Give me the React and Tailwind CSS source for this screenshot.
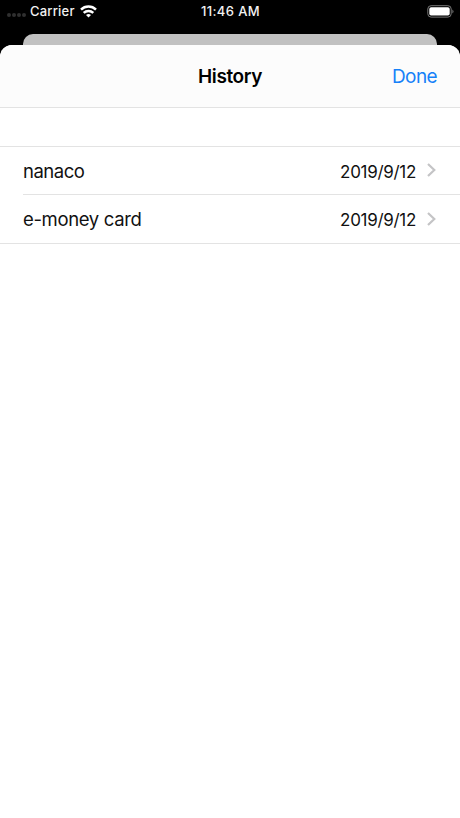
const entries = [
  { name: "nanaco", date: "2019/9/12", tracking: "tracking-[-0.5px]" },
  { name: "e-money card", date: "2019/9/12", tracking: "tracking-[-0.35px]" },
];

function StatusBar() {
  return (
    <div className="flex h-[23px] items-center justify-between pr-[6px] pl-[7px] text-[13px] leading-[23px] font-medium text-[#f2f2f2]">
      <div className="flex w-[120px] items-center">
        <div className="mt-[7px] flex gap-[1px]">
          {[0, 1, 2, 3].map((dot) => (
            <span key={dot} className="size-[4px] rounded-full bg-[#303030]" />
          ))}
        </div>
        <span className="ml-[4px] tracking-[0.2px]">Carrier</span>
        <svg className="ml-[5px]" width="17" height="13" viewBox="0 0 17 13" fill="none" stroke="#fff" strokeWidth="2.5">
          <path d="M1 4.6C5.2.5 11.8.5 16 4.6" />
          <path d="M3.7 7.9C6.4 5.3 10.6 5.3 13.3 7.9" />
          <path d="M8.5 12.6 6 10.1Q8.5 8 11 10.1Z" fill="#fff" stroke="none" />
        </svg>
      </div>
      <span className="tracking-[0.4px]">11:46 AM</span>
      <div className="flex w-[120px] justify-end">
        <svg width="27" height="13" viewBox="0 0 27 13">
          <rect x=".8" y=".7" width="23.4" height="11.4" rx="3.3" fill="none" stroke="#777" />
          <rect x="2.3" y="2.2" width="20.4" height="8.4" rx="1.8" fill="#fff" />
          <path d="M25.4 4.4Q27.6 6.4 25.4 8.4Z" fill="#777" />
        </svg>
      </div>
    </div>
  );
}

export default function App() {
  return (
    <div className="flex h-[818px] w-[460px] flex-col overflow-hidden bg-black font-['Inter','Liberation_Sans',sans-serif]">
      <StatusBar />
      <div className="mx-[23px] mt-[11px] h-[23px] shrink-0 rounded-t-[10px] bg-[#c1c1c1]" />
      <main className="-mt-[12px] flex-1 overflow-hidden rounded-t-[12px] bg-white">
        <header className="grid h-[63px] grid-cols-3 items-center border-b border-[#e3e3e3] bg-[#fcfcfc] px-[23px] pt-[2px] text-[19px]">
          <h1 className="col-start-2 text-center font-semibold tracking-[-0.4px] text-black">History</h1>
          <button className="justify-self-end tracking-[-0.6px] text-[#1681f8]">Done</button>
        </header>
        <ul className="mt-[38px] border-y border-[#e3e3e3]">
          {entries.map((entry) => (
            <li key={entry.name} className="group pl-[23px]">
              <div className="flex h-[48px] items-center border-[#e3e3e3] pr-[24px] text-[#111] group-first:border-b">
                <span className={"flex-1 pt-[2px] text-[18.5px] " + entry.tracking}>{entry.name}</span>
                <span className="pt-[4px] text-[17px] tracking-[-0.3px]">{entry.date}</span>
                <svg className="ml-[11px] group-first:mb-[1px]" width="9" height="14" viewBox="0 0 9 14" fill="none" stroke="#c4c4c6" strokeWidth="2.2">
                  <path d="M1 1 7.3 7 1 13" />
                </svg>
              </div>
            </li>
          ))}
        </ul>
      </main>
    </div>
  );
}
